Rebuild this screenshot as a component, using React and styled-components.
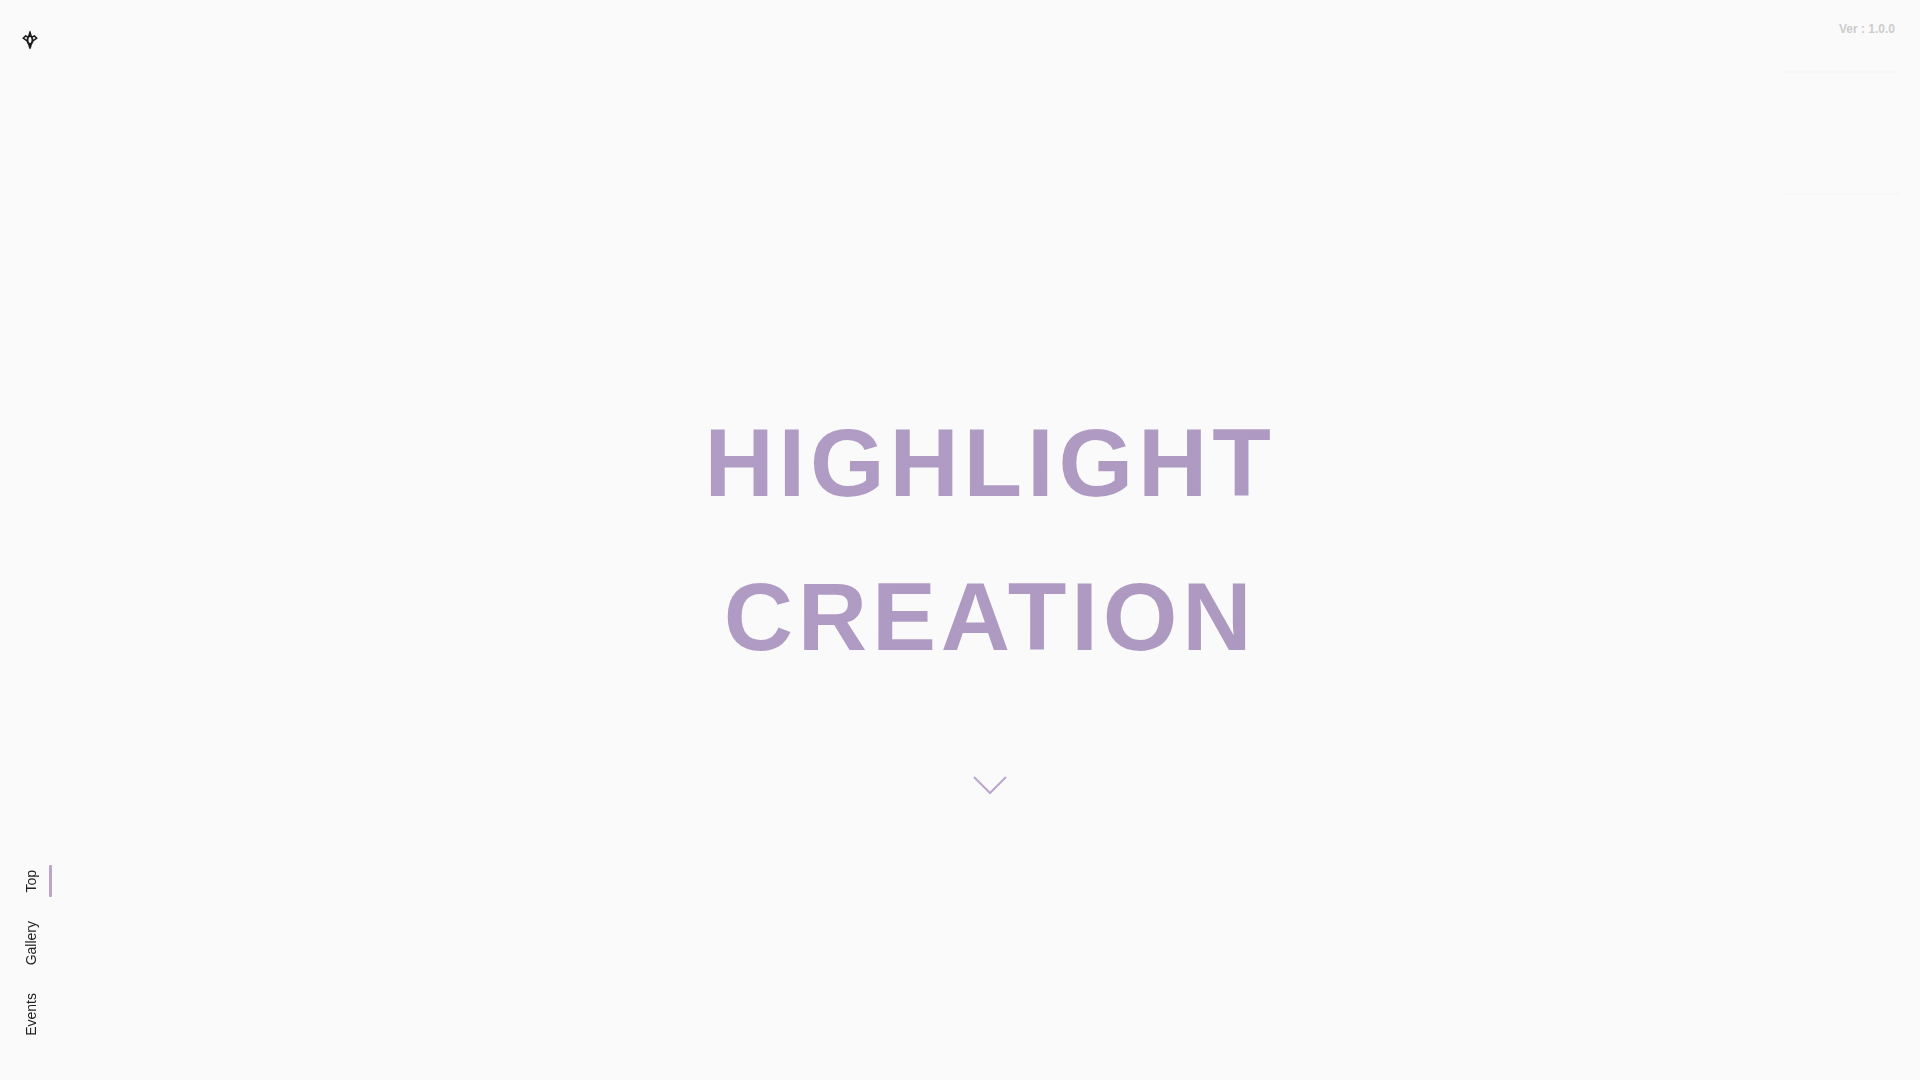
import styled, { createGlobalStyle } from 'styled-components';

const GlobalStyle = createGlobalStyle`
    * {
        box-sizing: border-box;
    }
    body {
        margin: 0;
        background-color: #fafafa;
        color: #222;
        font-family: "Liberation Sans", Arial, sans-serif;
    }
`;

const Container = styled.div`
    position: relative;
    display: grid;
    grid-template-columns: 60px 1fr;
    min-height: 100vh;
`;

const Sidebar = styled.header`
    display: flex;
    flex-direction: column;
    justify-content: space-between;
    align-items: center;
    padding: 30px 0 36px;
`;

const Logo = styled.a`
    display: block;
    height: 20px;
    color: #1c1c1c;
    svg {
        display: block;
    }
`;

const Nav = styled.nav`
    display: flex;
    flex-direction: column;
    width: 100%;
    gap: 12px;
`;

const NavLink = styled.a`
    position: relative;
    display: flex;
    justify-content: center;
    padding: 8px 0 8px 2px;
    color: #222;
    font-size: 14px;
    line-height: 20px;
    text-decoration: none;
    span {
        writing-mode: vertical-rl;
        transform: rotate(180deg);
    }
    &::after {
        content: '';
        display: ${({ $active }) => ($active ? 'block' : 'none')};
        position: absolute;
        top: 3px;
        bottom: 4px;
        right: 8px;
        width: 3px;
        border-radius: 1px;
        background-color: #b9a5cd;
    }
`;

const Main = styled.main`
    display: grid;
    grid-template-rows: 1fr auto 1fr;
    justify-items: center;
`;

const Title = styled.h1`
    grid-row: 2;
    margin: 0;
    font-size: 96px;
    line-height: 154px;
    font-weight: bold;
    letter-spacing: 0.05em;
    text-align: center;
    background-image: linear-gradient(135deg, #b09cc4, #ad99c0);
    background-clip: text;
    color: transparent;
`;

const ScrollLink = styled.a`
    grid-row: 3;
    align-self: start;
    margin-top: 82px;
    color: #bba7ce;
    svg {
        display: block;
    }
`;

const Aside = styled.aside`
    position: absolute;
    top: 0;
    right: 20px;
    width: 115px;
`;

const Version = styled.p`
    height: 71px;
    margin: 0;
    padding: 21px 5px 0 0;
    color: #ccc;
    font-size: 12px;
    line-height: 16px;
    font-weight: bold;
    text-align: right;
`;

const Panel = styled.div`
    height: 124px;
    border-top: 2px solid #f7f7f7;
    border-bottom: 2px solid #f7f7f7;
`;

const links = ['Top', 'Gallery', 'Events'];

export default function App() {
    return (
        <Container>
            <GlobalStyle />
            <Sidebar>
                <Logo href="#top" aria-label="Home">
                    <svg width="16" height="20" viewBox="0 0 16 20" fill="currentColor">
                        <path fillRule="evenodd" d="M8 0.5 C9 1.5 9.2 4 10 6 C11 8 11.6 9 11.6 10.5 C11.6 12.5 10 14 9.5 16 C9.2 17.5 8.8 19 8 19.3 C7.2 19 6.8 17.5 6.5 16 C6 14 4.4 12.5 4.4 10.5 C4.4 9 5 8 6 6 C6.8 4 7 1.5 8 0.5 Z M8 7 C6.9 7 6.5 8.6 6.5 10 C6.5 11.4 6.9 13 8 13 C9.1 13 9.5 11.4 9.5 10 C9.5 8.6 9.1 7 8 7 Z" />
                        <path d="M6 7 L3.6 6 L1.3 8.2 L5 10.8 M10 7 L12.4 6 L14.7 8.2 L11 10.8" fill="none" stroke="currentColor" strokeWidth="1.5" />
                    </svg>
                </Logo>
                <Nav>
                    {links.map((link, i) => (
                        <NavLink key={link} href={`#${link.toLowerCase()}`} $active={i === 0}>
                            <span>{link}</span>
                        </NavLink>
                    ))}
                </Nav>
            </Sidebar>
            <Main id="top">
                <Title>HIGHLIGHT<br />CREATION</Title>
                <ScrollLink href="#gallery" aria-label="Scroll down">
                    <svg width="36" height="20" viewBox="0 0 36 20" fill="none" stroke="currentColor" strokeWidth="2">
                        <path d="M2 1 L18 17 L34 1" />
                    </svg>
                </ScrollLink>
            </Main>
            {/* version info */}
            <Aside>
                <Version>Ver : 1.0.0</Version>
                <Panel />
            </Aside>
        </Container>
    );
}
